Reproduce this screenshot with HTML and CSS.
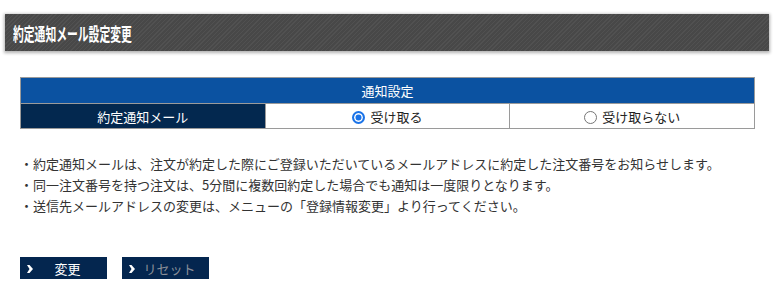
FILE: index.html
```html
<!DOCTYPE html>
<html lang="ja">
<head>
<meta charset="utf-8">
<link rel="stylesheet" href="styles.css">
</head>
<body>
<div class="page">
  <h1 class="title"><span class="title-text">約定通知メール設定変更</span></h1>
  <div class="content">
    <table class="settings">
      <tr><th colspan="3" class="head">通知設定</th></tr>
      <tr>
        <th class="label">約定通知メール</th>
        <td class="opt"><span class="radio on"></span>受け取る</td>
        <td class="opt"><span class="radio"></span>受け取らない</td>
      </tr>
    </table>
    <ul class="notes">
      <li>・約定通知メールは、注文が約定した際にご登録いただいているメールアドレスに約定した注文番号をお知らせします。</li>
      <li>・同一注文番号を持つ注文は、5分間に複数回約定した場合でも通知は一度限りとなります。</li>
      <li>・送信先メールアドレスの変更は、メニューの「登録情報変更」より行ってください。</li>
    </ul>
    <div class="buttons">
      <span class="btn"><svg class="arrow" width="6" height="8" viewBox="0 0 6 8"><polygon points="0,0 2.5,0 6,4 2.5,8 0,8 2.5,4" fill="#fff"/></svg><span class="btn-text">変更</span></span>
      <span class="btn disabled"><svg class="arrow" width="6" height="8" viewBox="0 0 6 8"><polygon points="0,0 2.5,0 6,4 2.5,8 0,8 2.5,4" fill="#fff"/></svg><span class="btn-text">リセット</span></span>
    </div>
  </div>
</div>
</body>
</html>
```
FILE: styles.css
```css
html, body {
  margin: 0;
  padding: 0;
  background: #fff;
}
body {
  font-family: "Noto Sans CJK JP", "Noto Sans", sans-serif;
  color: #222;
  font-size: 13px;
}
.page {
  padding: 14px 8px 0 5px;
}
.title {
  margin: 0;
  height: 37px;
  box-sizing: border-box;
  padding: 0 0 0 8px;
  display: flex;
  align-items: center;
  color: #fff;
  font-size: 18px;
  font-weight: bold;
  background-color: #4b4b4b;
  background-image: repeating-linear-gradient(135deg, #515151 0 1px, #484848 1px 3px);
  box-shadow: 0 1px 3px 1px rgba(0,0,0,0.3);
}
.title-text {
  display: inline-block;
  transform: scaleX(0.6);
  transform-origin: left center;
  white-space: nowrap;
}
.content {
  padding: 26px 14px 0 15px;
}
.settings {
  width: 735px;
  border-collapse: collapse;
  table-layout: fixed;
}
.settings th, .settings td {
  border: 1px solid #9a9a9a;
  text-align: center;
  font-weight: normal;
  padding: 0;
}
.head {
  height: 25px;
  background: #0b52a1;
  color: #fff;
}
.label {
  height: 24px;
  background: #03284f;
  color: #fff;
}
.opt {
  background: #fff;
  color: #222;
}
.radio {
  display: inline-block;
  width: 13px;
  height: 13px;
  border: 1px solid #767676;
  border-radius: 50%;
  vertical-align: -2px;
  margin-right: 5px;
  box-sizing: border-box;
  background: #fff;
}
.radio.on {
  border: 2px solid #1a73e8;
  box-shadow: inset 0 0 0 1.5px #fff, inset 0 0 0 6px #1a73e8;
}
.notes {
  list-style: none;
  margin: 24px 0 0 0;
  padding: 0;
  color: #333;
  line-height: 21px;
}
.buttons {
  margin-top: 41px;
  display: flex;
  gap: 15px;
}
.btn {
  position: relative;
  width: 87px;
  height: 22px;
  box-sizing: border-box;
  padding-left: 8px;
  background: #04264f;
  color: #fff;
  display: flex;
  align-items: center;
  justify-content: center;
  font-size: 13px;
}
.btn.disabled .btn-text {
  color: #8a8f98;
}
.arrow {
  position: absolute;
  left: 7px;
  top: 8px;
}
```
